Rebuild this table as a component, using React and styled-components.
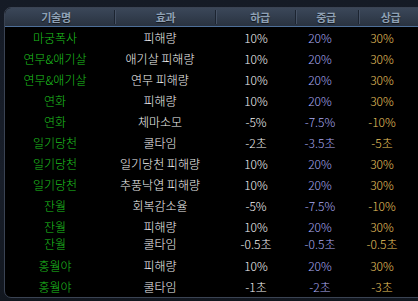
import React from "react";
import styled, { createGlobalStyle } from "styled-components";

const Global = createGlobalStyle`
  html, body { margin: 0; padding: 0; }
  body {
    width: 418px;
    height: 301px;
    overflow: hidden;
    background: linear-gradient(180deg, #151b26 0%, #181e29 60%, #12171f 100%);
    font-family: "Noto Sans CJK KR", "Noto Sans", sans-serif;
  }
`;

const Panel = styled.div`
  margin: 7px 0 0 4px;
  width: 430px;
  height: 289px;
  border: 1px solid #3a4353;
  border-radius: 7px;
  overflow: hidden;
  background: #000;
  display: flex;
  flex-direction: column;
`;

const Header = styled.div`
  display: grid;
  grid-template-columns: 110px 101px 80px 63px 1fr;
  height: 18px;
  background: linear-gradient(180deg, #3b4759 0%, #323d4d 50%, #29323f 100%);
  border-bottom: 1px solid #4e6f98;
`;

const HeadCell = styled.div`
  position: relative;
  display: flex;
  align-items: center;
  justify-content: center;
  padding: ${(p) => p.$pad || "0"};
  font-size: 11px;
  font-weight: 700;
  color: #8fa1b5;
  text-shadow: 0 1px 1px rgba(0, 0, 0, 0.6);
  letter-spacing: -0.3px;
  ${(p) =>
    p.$sep &&
    `
    &::before {
      content: "";
      position: absolute;
      left: -1px;
      top: 2px;
      bottom: 2px;
      width: 1px;
      background: #1c2430;
      box-shadow: 1px 0 0 #465265;
    }
  `}
`;

const Body = styled.div`
  display: flex;
  flex-direction: column;
`;

const Row = styled.div`
  display: grid;
  grid-template-columns: 100px 110px 82px 46px 78px;
  height: ${(p) => p.$h}px;
  padding-top: ${(p) => p.$pt || 0}px;
  box-sizing: border-box;
  align-items: center;
  font-size: 12px;
  font-weight: 300;
  line-height: 12px;
  white-space: nowrap;
`;

const Cell = styled.div`
  text-align: center;
  color: ${(p) => p.$color};
`;

const GREEN = "#1fc21f";
const WHITE = "#f4f4f4";
const LAV = "#aaaaf2";
const GOLD = "#eac35f";

const rows = [
  ["마궁폭사", "피해량", "10%", "20%", "30%", 21],
  ["연무&애기살", "애기살 피해량", "10%", "20%", "30%", 21],
  ["연무&애기살", "연무 피해량", "10%", "20%", "30%", 21],
  ["연화", "피해량", "10%", "20%", "30%", 21],
  ["연화", "체마소모", "-5%", "-7.5%", "-10%", 21],
  ["일기당천", "쿨타임", "-2초", "-3.5초", "-5초", 21],
  ["일기당천", "일기당천 피해량", "10%", "20%", "30%", 21],
  ["일기당천", "추풍낙엽 피해량", "10%", "20%", "30%", 21],
  ["잔월", "회복감소율", "-5%", "-7.5%", "-10%", 21],
  ["잔월", "피해량", "10%", "20%", "30%", 22],
  ["잔월", "쿨타임", "-0.5초", "-0.5초", "-0.5초", 12],
  ["홍월야", "피해량", "10%", "20%", "30%", 26, 5],
  ["홍월야", "쿨타임", "-1초", "-2초", "-3초", 21],
];

export default function App() {
  return (
    <>
      <Global />
      <Panel>
        <Header>
          <HeadCell $pad="0 8px 0 0">기술명</HeadCell>
          <HeadCell $sep>효과</HeadCell>
          <HeadCell $sep $pad="0 0 0 8px">하급</HeadCell>
          <HeadCell $sep $pad="0 3px 0 0">중급</HeadCell>
          <HeadCell $sep $pad="0 13px 0 0">상급</HeadCell>
        </Header>
        <Body>
          {rows.map(([name, eff, lo, mid, hi, h, pt], i) => (
            <Row key={i} $h={h} $pt={pt}>
              <Cell $color={GREEN}>{name}</Cell>
              <Cell $color={WHITE}>{eff}</Cell>
              <Cell $color={WHITE}>{lo}</Cell>
              <Cell $color={LAV}>{mid}</Cell>
              <Cell $color={GOLD}>{hi}</Cell>
            </Row>
          ))}
        </Body>
      </Panel>
    </>
  );
}
